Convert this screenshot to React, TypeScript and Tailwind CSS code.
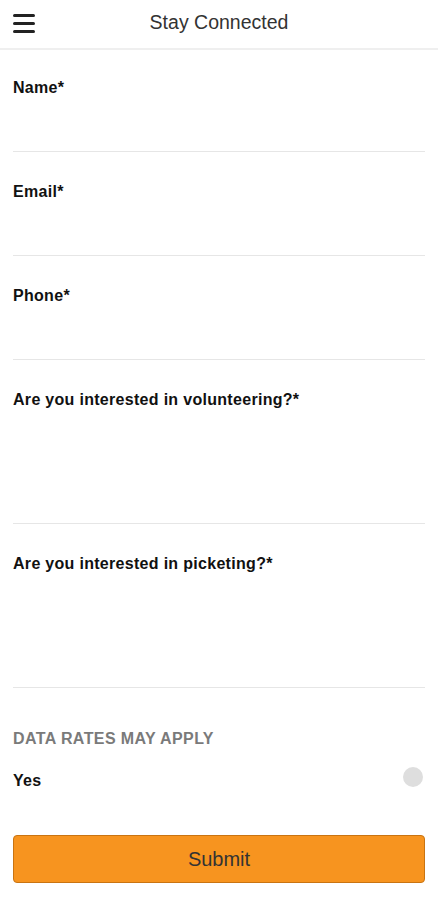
import { useState } from "react";

const fields = [
  { label: "Name*", tall: false },
  { label: "Email*", tall: false },
  { label: "Phone*", tall: false },
  { label: "Are you interested in volunteering?*", tall: true },
  { label: "Are you interested in picketing?*", tall: true },
];

export default function App() {
  const [agree, setAgree] = useState(false);

  return (
    <div className="min-h-screen w-full bg-white text-[#111] font-['Liberation_Sans',Arial,sans-serif]">
      <Header />
      <form className="px-[13px]" onSubmit={(e) => e.preventDefault()}>
        {fields.map((f, i) => (
          <div key={f.label} className={`border-b border-[#e6e6e6] ${i === 0 ? "pt-[29px]" : "pt-[31px]"}`}>
            <label className="block text-[16px] font-bold leading-[18px] tracking-[0.3px]">{f.label}</label>
            <div className={f.tall ? "h-[114px]" : "h-[54px]"} />
          </div>
        ))}

        <div className="pt-[42px] text-[16px] font-bold leading-[18px] text-[#7a7a7a] tracking-[0.4px]">
          DATA RATES MAY APPLY
        </div>

        <div className="mt-[24px] flex items-center justify-between">
          <span className="text-[16px] font-bold leading-[18px] tracking-[0.3px]">Yes</span>
          <button
            type="button"
            onClick={() => setAgree(!agree)}
            className={`-mt-[8px] mr-[2px] h-[20px] w-[20px] rounded-full ${agree ? "bg-[#f7931e]" : "bg-[#dedede]"}`}
          />
        </div>

        <button
          type="submit"
          className="mt-[45px] h-[48px] w-full rounded-[4px] border border-[#c97412] bg-[#f7941f] text-[20px] text-[#333]"
        >
          Submit
        </button>
      </form>
    </div>
  );
}

function Header() {
  return (
    <header className="relative flex h-[50px] items-center justify-center border-b-2 border-[#efefef]">
      <button className="absolute left-[13px] top-[14px] flex w-[22px] flex-col gap-[5px]">
        <span className="h-[3px] w-full rounded-sm bg-[#222]" />
        <span className="h-[3px] w-full rounded-sm bg-[#222]" />
        <span className="h-[3px] w-full rounded-sm bg-[#222]" />
      </button>
      <h1 className="-mt-[3px] text-[19.5px] text-[#333]">Stay Connected</h1>
    </header>
  );
}
